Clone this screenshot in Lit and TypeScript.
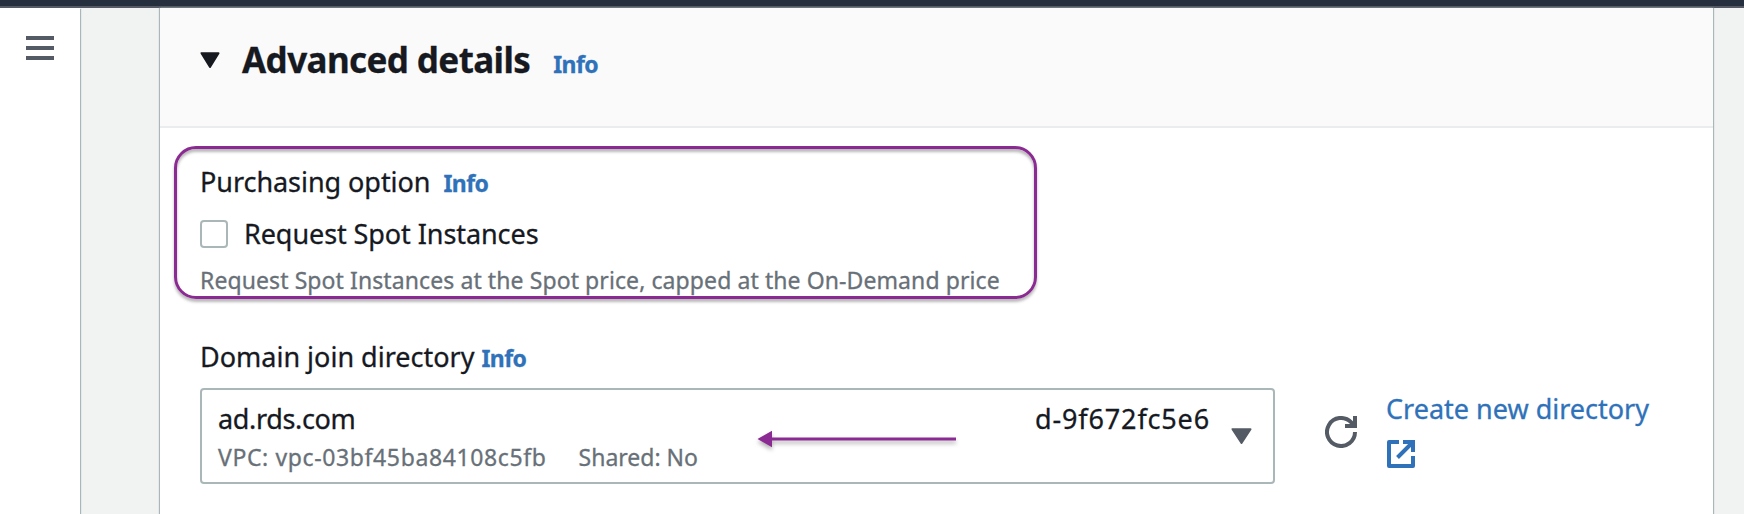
import { LitElement, html, css } from "lit";

class AppRoot extends LitElement {
  static styles = css`
    :host {
      display: flex;
      flex-direction: column;
      box-sizing: border-box;
      width: 100%;
      height: 514px;
      overflow: hidden;
      background: #f1f3f3;
      color: #16191f;
      font: 400 27px/34px "Noto Sans", sans-serif;
      -webkit-text-stroke: 0.3px currentColor;
      white-space: nowrap;
    }
    * { box-sizing: border-box; }
    svg { display: block; flex: none; }
    .topbar { flex: none; height: 8px; background: #252f3e; border-bottom: 2px solid #545b64; }
    .page { flex: 1; display: flex; min-height: 0; }
    .nav {
      width: 80px;
      padding: 28px 0 0 26px;
      background: #fff;
      box-shadow: 1px 1px 1px #aab7b8;
    }
    .burger { display: flex; flex-direction: column; gap: 6px; width: 28px; }
    .bar { height: 4px; background: #545b64; }
    .card {
      position: relative;
      width: 1553px;
      margin-left: 80px;
      background: #fff;
      box-shadow: -1px 0 1px #aab7b8, 1px 0 1px #aab7b8;
    }
    .head {
      display: flex;
      height: 120px;
      padding: 30px 0 0 40px;
      background: #fafafa;
      border-bottom: 2px solid #eaeded;
    }
    .caret { margin: 14px 22px 0 0; }
    .heading { display: flex; align-items: baseline; gap: 23px; height: 44px; }
    h2 { margin: 0; font-size: 35px; font-weight: 700; line-height: 44px; letter-spacing: -0.6px; }
    .info { color: #3072b9; font-size: 23px; font-weight: 700; letter-spacing: -0.6px; }
    .body { padding: 37px 0 0 40px; }
    .label { display: flex; align-items: baseline; height: 34px; }
    .purchase { gap: 13px; letter-spacing: -0.05px; }
    .domain { gap: 7px; margin-top: 45px; }
    .option { display: flex; align-items: center; gap: 16px; margin-top: 18px; height: 34px; letter-spacing: -0.08px; }
    .box { width: 28px; height: 28px; border: 2px solid #aab7b8; border-radius: 4px; background: #fff; }
    .hint { margin-top: 14px; color: #687078; font-size: 23px; line-height: 30px; letter-spacing: 0.09px; }
    .row { display: flex; margin-top: 14px; }
    .select {
      position: relative;
      display: flex;
      width: 1075px;
      height: 96px;
      padding: 12px 21px 0 16px;
      border: 2px solid #aab7b8;
      border-radius: 4px;
    }
    .value { flex: 1; }
    .name { letter-spacing: -0.35px; }
    .meta {
      display: flex;
      gap: 32px;
      margin-top: 6px;
      color: #687078;
      font-size: 23px;
      line-height: 30px;
    }
    .vpc { letter-spacing: 0.62px; }
    .dirid { letter-spacing: 0.85px; margin-right: 21px; }
    .drop { margin-top: 26px; }
    .refresh { margin: 28px 0 0 50px; }
    .create { margin: 4px 0 0 29px; color: #3072b9; text-decoration: none; }
    .ext { margin: 14px 0 0 1px; }
    .highlight {
      position: absolute;
      left: 14px;
      top: 138px;
      width: 863px;
      height: 153px;
      border: 3px solid #8b2a92;
      border-radius: 22px;
      box-shadow: 0 3px 3px rgba(0, 0, 0, 0.28), inset 0 3px 3px rgba(0, 0, 0, 0.28);
    }
    .arrow {
      position: absolute;
      left: 555px;
      top: 40px;
      filter: drop-shadow(0 3px 2px rgba(0, 0, 0, 0.3));
    }
  `;

  render() {
    return html`
      <div class="topbar"></div>
      <div class="page">
        <nav class="nav">
          <div class="burger"><div class="bar"></div><div class="bar"></div><div class="bar"></div></div>
        </nav>
        <main class="card">
          <header class="head">
            <svg class="caret" width="20" height="17" viewBox="0 0 20 17"><path d="M1.5 1.2H18.5L10 15Z" fill="#16191f" stroke="#16191f" stroke-width="2" stroke-linejoin="round"/></svg>
            <div class="heading"><h2>Advanced details</h2><span class="info">Info</span></div>
          </header>
          <section class="body">
            <div class="label purchase"><span>Purchasing option</span><span class="info">Info</span></div>
            <div class="option"><span class="box"></span><span>Request Spot Instances</span></div>
            <div class="hint">Request Spot Instances at the Spot price, capped at the On-Demand price</div>
            <div class="label domain"><span>Domain join directory</span><span class="info">Info</span></div>
            <div class="row">
              <div class="select">
                <div class="value">
                  <div class="name">ad.rds.com</div>
                  <div class="meta"><span class="vpc">VPC: vpc-03bf45ba84108c5fb</span><span>Shared: No</span></div>
                </div>
                <span class="dirid">d-9f672fc5e6</span>
                <svg class="drop" width="21" height="17" viewBox="0 0 21 17"><path d="M1.5 1.2H19.5L10.5 15Z" fill="#545b64" stroke="#545b64" stroke-width="2" stroke-linejoin="round"/></svg>
                <svg class="arrow" width="200" height="18" viewBox="0 0 200 18"><path d="M0.5 9L15 0.8V7.4H199V10.6H15V17.2Z" fill="#8b2a92"/></svg>
              </div>
              <svg class="refresh" width="32" height="32" viewBox="0 0 32 32" fill="none" stroke="#545b64" stroke-width="4"><path d="M30 16A14 14 0 1 1 26 6.2L29 9.5"/><path d="M20 10H30V0"/></svg>
              <a class="create">
                <div>Create new directory</div>
                <svg class="ext" width="28" height="28" viewBox="0 0 28 28" fill="none" stroke="#3072b9" stroke-width="4" stroke-linejoin="round"><path d="M12 2H2V26H26V16"/><path stroke-linejoin="miter" d="M16 2H26V12M25 3L10.5 17.5"/></svg>
              </a>
            </div>
          </section>
          <div class="highlight"></div>
        </main>
      </div>
    `;
  }
}
customElements.define("app-root", AppRoot);
